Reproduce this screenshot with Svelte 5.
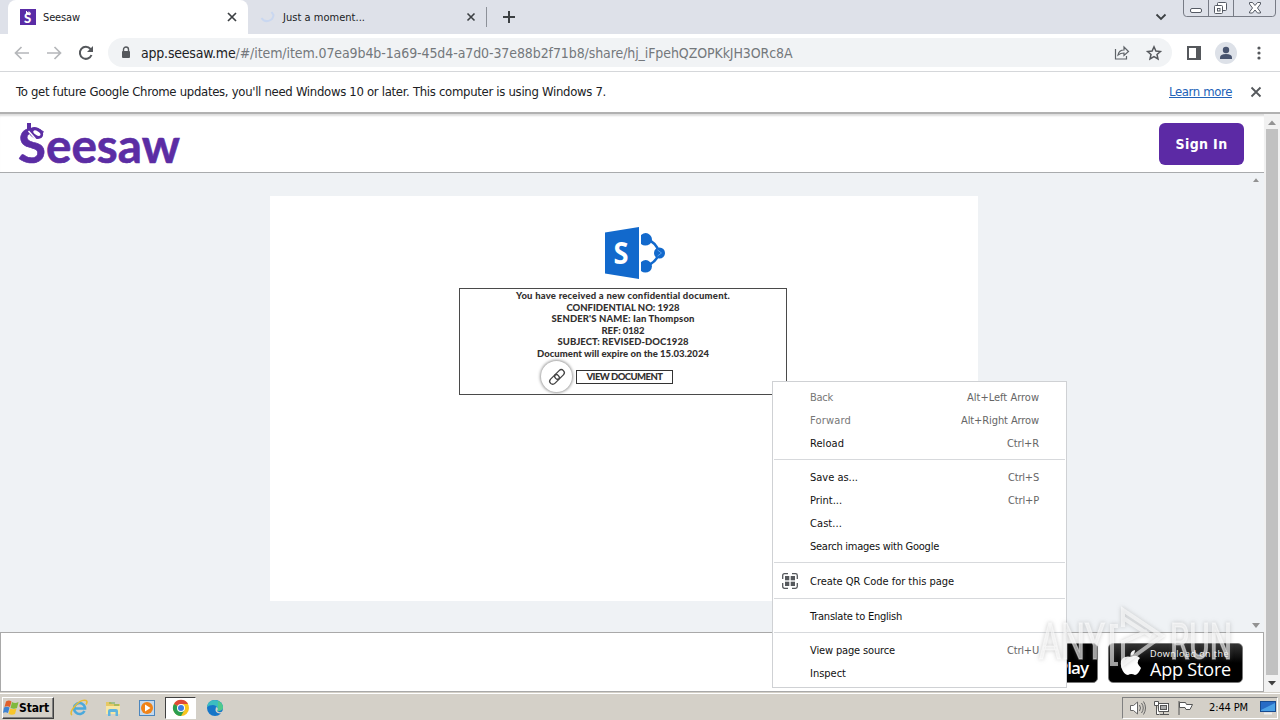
<script>
  const menu = [
    [
      { label: "Back", width: 23, keys: "Alt+Left Arrow", keysWidth: 72, disabled: true },
      { label: "Forward", width: 41, keys: "Alt+Right Arrow", keysWidth: 78, disabled: true },
      { label: "Reload", width: 34, keys: "Ctrl+R", keysWidth: 32 },
    ],
    [
      { label: "Save as...", width: 48, keys: "Ctrl+S", keysWidth: 31 },
      { label: "Print...", width: 32, keys: "Ctrl+P", keysWidth: 31 },
      { label: "Cast...", width: 32 },
      { label: "Search images with Google", width: 129 },
    ],
    [{ label: "Create QR Code for this page", width: 144, icon: true }],
    [{ label: "Translate to English", width: 92 }],
    [
      { label: "View page source", width: 85, keys: "Ctrl+U", keysWidth: 32 },
      { label: "Inspect", width: 36 },
    ],
  ];

  const lines = [
    ["You have received a new confidential document.", 214],
    ["CONFIDENTIAL NO: 1928", 113],
    ["SENDER'S NAME: Ian Thompson", 143],
    ["REF: 0182", 43],
    ["SUBJECT: REVISED-DOC1928", 131],
    ["Document will expire on the 15.03.2024", 172],
  ];

  // spread the letters so the text takes up the given width
  function fit(node, width) {
    const now = node.getBoundingClientRect().width;
    node.style.letterSpacing = `${(width - now) / node.textContent.length}px`;
  }
</script>

<div class="screen">
  <div class="tabs">
    <div class="tab active">
      <svg width="16" height="16" viewBox="0 0 16 16">
        <rect width="16" height="16" fill="#5a2ca6" />
        <text x="4" y="13.5" font-family="Lato" font-weight="900" font-size="13" fill="#fff">S</text>
        <path d="M6.500 2v3q4 1 4-1q-1-2-4 0" fill="none" stroke="#fff" />
      </svg>
      <span class="title" use:fit={37}>Seesaw</span>
      <svg class="close" width="10" height="10" viewBox="0 0 10 10"><path d="M1 1l8 8M9 1l-8 8" stroke="#3c4043" stroke-width="1.7" /></svg>
    </div>
    <div class="tab">
      <svg width="16" height="16" viewBox="0 0 16 16"><path d="M1.500 9a6.500 6.500 0 0 0 12-3l-2-3" fill="none" stroke="#c9d7f0" stroke-width="2" /></svg>
      <span class="title" use:fit={82}>Just a moment...</span>
      <svg class="close" width="10" height="10" viewBox="0 0 10 10"><path d="M1.500 1.500l7 7M8.500 1.500l-7 7" stroke="#3c4043" stroke-width="1.600" /></svg>
    </div>
    <span class="split"></span>
    <svg class="plus" width="12" height="12" viewBox="0 0 12 12"><path d="M6 0v12M0 6h12" stroke="#3c4043" stroke-width="2" /></svg>
    <svg class="chevron" width="12" height="8" viewBox="0 0 12 8"><path d="M1.500 1.500l4.500 4.500l4.500-4.500" fill="none" stroke="#3c4043" stroke-width="1.800" /></svg>
    <svg class="caption" width="97" height="18" viewBox="0 0 97 18" fill="none" stroke="#777b85">
      <path d="M.5 0v13q0 3.500 3 3.500h86q3 0 3-3.500V0M25.500 0v16M50.500 0v16" />
      <rect x="7.500" y="8.500" width="11" height="4" rx="1.500" fill="#fff" stroke="#555a64" />
      <rect x="34.500" y="2.500" width="9" height="8" rx="1" fill="#fff" stroke="#555a64" />
      <rect x="31.500" y="5.500" width="8" height="8" rx="1" fill="#fff" stroke="#555a64" />
      <rect x="34.500" y="8.500" width="2.500" height="2.500" stroke="#555a64" />
      <path d="M66.500 2.500h3l2.500 3l2.500-3h3v1.500l-3 4l3 4v1h-3l-2.500-3l-2.500 3h-3v-1l3-4l-3-4z" fill="#fff" stroke="#555a64" />
    </svg>
  </div>

  <div class="toolbar">
    <svg width="16" height="14" viewBox="0 0 16 14" fill="none" stroke="#b5b7ba" stroke-width="1.700"><path d="M15 7H2M7.500 1L1.500 7l6 6" /></svg>
    <svg class="fwd" width="16" height="14" viewBox="0 0 16 14" fill="none" stroke="#b5b7ba" stroke-width="1.700"><path d="M1 7h13M8.500 1l6 6l-6 6" /></svg>
    <svg class="reload" width="16" height="16" viewBox="0 0 16 16"><path d="M13.500 10A6 6 0 1 1 12.500 4L14 5.500" fill="none" stroke="#55585c" stroke-width="2" /><path d="M15 1v6H9z" fill="#55585c" /></svg>
    <div class="omnibox">
      <svg width="10" height="13" viewBox="0 0 10 13"><path d="M2.500 6V3.500a2.500 2.500 0 0 1 5 0V6" fill="none" stroke="#55585c" stroke-width="1.400" /><rect x="1" y="5" width="8" height="7" rx="1" fill="#55585c" /></svg>
      <span class="url"><b use:fit={94.5}>app.seesaw.me</b><i use:fit={557}>/#/item/item.07ea9b4b-1a69-45d4-a7d0-37e88b2f71b8/share/hj_iFpehQZOPKkJH3ORc8A</i></span>
      <svg class="share" width="16" height="14" viewBox="0 0 16 14" fill="none" stroke="#5f6368" stroke-width="1.200"><path d="M1.500 3v10h11v-3" /><path d="M4 9q1-5 6-5V1l4.500 4.500L10 9.500V7Q6.500 7 4 9z" /></svg>
      <svg class="star" width="16" height="16" viewBox="0 0 16 16" fill="none" stroke="#55585c" stroke-width="1.500"><path d="M8 1.800l1.900 4.200l4.500.5l-3.400 3l1 4.500L8 11.700L4 14l1-4.500l-3.400-3l4.500-.5z" /></svg>
    </div>
    <svg class="panel" width="14" height="14" viewBox="0 0 14 14"><rect x="1" y="1" width="12" height="12" fill="none" stroke="#55585c" stroke-width="2" /><path d="M9 1h4v12H9z" fill="#55585c" /></svg>
    <svg class="avatar" width="22" height="22" viewBox="0 0 22 22"><circle cx="11" cy="11" r="11" fill="#dde1e8" /><circle cx="11" cy="8" r="3.200" fill="#48546f" /><path d="M5 17v-1.500q0-3.500 6-3.500t6 3.500V17z" fill="#48546f" /></svg>
    <svg class="dots" width="4" height="14" viewBox="0 0 4 14" fill="#55585c"><circle cx="2" cy="2" r="1.600" /><circle cx="2" cy="7" r="1.600" /><circle cx="2" cy="12" r="1.600" /></svg>
  </div>

  <div class="infobar">
    <span use:fit={590}>To get future Google Chrome updates, you'll need Windows 10 or later. This computer is using Windows 7.</span>
    <span class="more" use:fit={63}>Learn more</span>
    <svg width="12" height="12" viewBox="0 0 12 12"><path d="M1.500 1.500l9 9M10.500 1.500l-9 9" stroke="#55585c" stroke-width="1.800" /></svg>
  </div>

  <div class="view">
    <div class="page">
      <header>
        <svg width="166" height="46" viewBox="0 0 166 46" fill="#5b2da4" font-family="Lato" font-weight="700">
          <text x="-1" y="43" font-size="48" stroke="#5b2da4" stroke-width=".6" textLength="28" lengthAdjust="spacingAndGlyphs">S</text>
          <text x="27" y="43" font-size="47" stroke="#5b2da4" stroke-width=".6" textLength="134" lengthAdjust="spacingAndGlyphs">eesaw</text>
          <ellipse cx="17" cy="13" rx="7.500" ry="5.500" fill="#5b2da4" transform="rotate(25 17 13)" />
          <path d="M8 3h4v7H8z" />
          <ellipse cx="18" cy="13.200" rx="4" ry="2" fill="#fff" transform="rotate(32 18 13)" />
          <path d="M9.500 11l7 8" stroke="#fff" stroke-width="1.500" />
        </svg>
        <button><span use:fit={52}>Sign In</span></button>
      </header>

      <main>
        <div class="slide">
          <svg class="sharepoint" width="62" height="54" viewBox="0 0 62 54">
            <path d="M1 6.500L35 1v52L1 47.500z" fill="#1269cc" />
            <text x="9.500" y="37.500" font-family="Open Sans" font-weight="700" font-size="30" fill="#fff" textLength="15" lengthAdjust="spacingAndGlyphs">S</text>
            <path d="M42 13q10 3 13 13M42 40q10-3 13-13" fill="none" stroke="#1269cc" stroke-width="2.500" />
            <path d="M37 9q5-4 9 0t0 9q-5 3-9 0zM37 36q5-4 9 0t0 9q-5 3-9 0z" fill="#1269cc" />
            <circle cx="55.500" cy="27" r="5.500" fill="#1269cc" />
            <path d="M53.500 24l4 3l-4 3" fill="none" stroke="#5aa0ec" />
          </svg>
          <div class="card">
            {#each lines as [text, width]}
              <p><span use:fit={width}>{text}</span></p>
            {/each}
            <div class="action">
              <span class="link">
                <svg width="18" height="18" viewBox="0 0 18 18" fill="none" stroke="#444" stroke-width="1.300">
                  <rect x="6" y="3.500" width="11" height="6" rx="3" transform="rotate(-45 11.500 6.500)" />
                  <rect x="1" y="8.500" width="11" height="6" rx="3" transform="rotate(-45 6.500 11.500)" />
                </svg>
              </span>
              <span class="doc"><span use:fit={76}>VIEW DOCUMENT</span></span>
            </div>
          </div>
        </div>
        <div class="inner-scroll">
          <svg width="6" height="4" viewBox="0 0 8 5"><path d="M0 5l4-5l4 5z" fill="#929292" /></svg>
          <svg width="8" height="5" viewBox="0 0 8 5"><path d="M0 0l4 5l4-5z" fill="#929292" /></svg>
        </div>
      </main>

      <footer>
        <div class="badge play"><span>Google Play</span></div>
        <div class="badge apple">
          <svg width="22" height="26" viewBox="0 0 22 26" fill="#fff"><path d="M11 7q5-3 9 1q-5 4 1 10q-3 7-6 7q-4-2-7 0Q4 25 1.500 18Q-1 9 5 7q3-1 6 0zM10.500 6Q10 1 15 0q0 5-4.500 6z" /></svg>
          <div>
            <small use:fit={79}>Download on the</small>
            <strong use:fit={81}>App Store</strong>
          </div>
        </div>
      </footer>
    </div>
    <div class="scrollbar">
      <svg width="8" height="5" viewBox="0 0 8 5"><path d="M0 5l4-4.500l4 4.500z" fill="#929292" /></svg>
      <div class="thumb"></div>
      <svg width="8" height="5" viewBox="0 0 8 5"><path d="M0 0l4 4.500l4-4.500z" fill="#404040" /></svg>
    </div>
  </div>

  <div class="taskbar">
    <div class="start">
      <svg width="16" height="15" viewBox="0 0 16 15">
        <path d="M3 1.500q3-2 5.500 0L7 7Q4 5.500 1.500 7z" fill="#e0602c" />
        <path d="M9 2q3 2 6.500 0L14 8q-3 1.500-6.500 0z" fill="#7fb93c" />
        <path d="M1 7.500q3-1.500 5.500 0L5 13q-3-1.500-5 0z" fill="#3e83d2" />
        <path d="M7 8.500q3 1.500 6.500 0L12 14q-3 1.500-6.500 0z" fill="#f8c62c" />
      </svg>
      <span use:fit={30}>Start</span>
    </div>
    <svg class="ie" width="18" height="18" viewBox="0 0 18 18" fill="none">
      <path d="M14.500 12A5.500 5.500 0 1 1 15 8.500v1H5" stroke="#4ba9dc" stroke-width="2.600" />
      <path d="M2 16Q-1 14 5 7T16 1.500q2 1 0 4" stroke="#e6bb36" stroke-width="1.600" />
    </svg>
    <svg width="18" height="18" viewBox="0 0 18 18">
      <path d="M2 3h5l1 2h8v10H2z" fill="#e6c865" /><path d="M2 7h14v8H2z" fill="#f8e7a4" />
      <path d="M4 17v-5q0-2 2-2h6q2 0 2 2v5h-2.500v-4h-5v4z" fill="#60b4dd" /><path d="M5 4h6M10 6h5" stroke="#6cad50" />
    </svg>
    <svg width="18" height="18" viewBox="0 0 18 18">
      <rect x="1.500" y="1.500" width="15" height="15" fill="#c4d9ee" stroke="#4c86bd" /><circle cx="9" cy="9" r="6" fill="#f08318" /><path d="M7 5.500l5.500 3.500L7 12.500z" fill="#fff" />
    </svg>
    <div class="chrome">
      <svg width="18" height="18" viewBox="0 0 18 18">
        <circle cx="9" cy="9" r="8" fill="#f9c51d" /><path d="M9 9L2 5A8 8 0 0 1 16 5H9z" fill="#df4937" /><path d="M9 9L2 5A8 8 0 0 0 9 17l3.500-6z" fill="#2b9e50" />
        <circle cx="9" cy="9" r="4" fill="#fff" /><circle cx="9" cy="9" r="3" fill="#3d7de3" />
      </svg>
    </div>
    <svg width="18" height="18" viewBox="0 0 18 18">
      <circle cx="9" cy="9" r="8" fill="#1676c8" />
      <path d="M1 8Q2 1 9 1q8 1 8 8q-1 3-6 3q1-6-4-6q-4 0-6 2z" fill="#3cbdc0" />
      <path d="M12 2q5 2 5 7q-1 3-5 3z" fill="#4fc98c" />
      <path d="M10 8q3 1 1 4q2 2 5.500.5L18 10v5l-4-.5Q8 14 10 8z" fill="#d4d0c8" />
    </svg>
    <div class="tray">
      <svg width="18" height="16" viewBox="0 0 18 16" fill="#fff" stroke="#666"><path d="M1.500 5.500h3L8.500 2v12l-4-3.500h-3z" /><path d="M10.500 5q2 3 0 6M12.500 3q3.500 5 0 10M14.500 1.500q4 6.500 0 13" fill="none" /></svg>
      <svg width="18" height="16" viewBox="0 0 18 16" fill="#fff" stroke="#555"><rect x="5.500" y="3.500" width="10" height="8" /><rect x="7.500" y="5.500" width="6" height="4" fill="#aaa" /><path d="M7 14.500h9M10.500 12v2M1.500 1.500h4v4h-4zM3.500 6v8.500h3" /></svg>
      <svg width="18" height="16" viewBox="0 0 18 16" fill="#fff" stroke="#555"><path d="M2 1v14M2.500 2.500h6l1 2h6l-2.500 5H9l-1-2H2.500z" /></svg>
      <span use:fit={39}>2:44 PM</span>
      <svg class="desk" width="16" height="14" viewBox="0 0 16 14"><rect x=".5" y=".5" width="15" height="10" fill="#286bc5" stroke="#174a8f" /><path d="M1 9L15 2v8H1z" fill="#4ca1e5" /><path d="M4 12.500h8" stroke="#eee" stroke-width="2" /></svg>
    </div>
  </div>

  <div class="menu">
    {#each menu as group, i}
      {#if i > 0}<hr />{/if}
      {#each group as item}
        <div class="item" class:disabled={item.disabled} class:tall={item.icon}>
          <span class="icon">
            {#if item.icon}
              <svg width="16" height="16" viewBox="0 0 16 16" fill="#55585c">
                <path d="M.7 6V2.500q0-1.800 1.800-1.800H6M10 .7h3.500q1.800 0 1.800 1.800V6M15.300 10v3.500q0 1.800-1.800 1.800H10M6 15.300H2.500q-1.800 0-1.800-1.800V10" fill="none" stroke="#55585c" stroke-width="1.300" />
                <rect x="3" y="3" width="4.300" height="4.300" /><rect x="8.700" y="3" width="4.300" height="4.300" /><rect x="3" y="8.700" width="4.300" height="4.300" /><rect x="8.700" y="8.700" width="4.300" height="4.300" />
              </svg>
            {/if}
          </span>
          <span class="label" use:fit={item.width}>{item.label}</span>
          {#if item.keys}<span class="keys" use:fit={item.keysWidth}>{item.keys}</span>{/if}
        </div>
      {/each}
    {/each}
  </div>

  <svg class="watermark" width="200" height="64" viewBox="0 0 200 64" font-family="Roboto" font-size="50">
    <text x="3" y="53" textLength="66" lengthAdjust="spacingAndGlyphs">ANY</text>
    <text x="134" y="53" textLength="62" lengthAdjust="spacingAndGlyphs">RUN</text>
    <path d="M82 20H76v38h6M87 21V4l39 26l-39 28V36l24-11M87 12l28 18" />
  </svg>
</div>

<style>
  :global(body) {
    margin: 0;
    overflow: hidden;
  }

  .screen {
    width: 1280px;
    height: 720px;
    position: relative;
    overflow: hidden;
    display: flex;
    flex-direction: column;
    background: #fff;
    font: 11px/14px "DejaVu Sans Condensed", "DejaVu Sans", sans-serif;
    font-stretch: condensed;
    color: #202124;
    white-space: nowrap;
  }

  svg {
    display: block;
    flex: none;
    overflow: visible;
    font-stretch: normal;
  }

  span {
    flex: none;
  }

  .tabs {
    height: 34px;
    display: flex;
    align-items: center;
    background: #dee1e9;
    padding-left: 8px;
  }

  .tab {
    box-sizing: border-box;
    width: 239px;
    height: 34px;
    display: flex;
    align-items: center;
    padding: 0 11px 0 12px;
  }

  .tab.active {
    width: 240px;
    background: #fff;
    border-radius: 8px 8px 0 0;
  }

  .tab .title {
    margin-left: 7px;
    padding-top: 2px;
  }

  .close {
    margin-left: auto;
  }

  .split {
    width: 1px;
    height: 20px;
    margin-left: -1px;
    background: #8d9199;
  }

  .plus {
    margin-left: 16px;
  }

  .chevron {
    margin-left: auto;
  }

  .caption {
    margin: -16px 0 0 16px;
  }

  .toolbar {
    height: 37px;
    display: flex;
    align-items: center;
    padding-left: 14px;
    border-bottom: 1px solid #d5d7da;
  }

  .fwd {
    margin-left: 16px;
  }

  .reload {
    margin: 0 14px 0 16px;
  }

  .omnibox {
    box-sizing: border-box;
    width: 1064px;
    height: 29px;
    border-radius: 15px;
    background: #f1f3f5;
    display: flex;
    align-items: center;
    padding: 0 10px 0 13px;
  }

  .url {
    margin-left: 10px;
    font-size: 14px;
    display: flex;
  }

  .url b,
  .url i {
    font-weight: normal;
    font-style: normal;
  }

  .url i {
    color: #74787c;
  }

  .share {
    margin-left: auto;
  }

  .star {
    margin-left: 16px;
  }

  .panel {
    margin-left: 15px;
  }

  .avatar {
    margin-left: 14px;
  }

  .dots {
    margin-left: 20px;
  }

  .infobar {
    height: 40px;
    display: flex;
    align-items: center;
    padding: 0 18px 0 16px;
    border-bottom: 2px solid #b1b1b1;
    font-size: 13px;
  }

  .more {
    margin: 0 18px 0 auto;
    color: #2262b8;
    text-decoration: underline;
  }

  .view {
    height: 578px;
    display: flex;
  }

  .page {
    width: 1264px;
    display: flex;
    flex-direction: column;
  }

  header {
    height: 58px;
    display: flex;
    align-items: center;
    justify-content: space-between;
    padding: 0 20px 0 19px;
    border-bottom: 1px solid #a9abad;
    box-shadow: inset 0 3px 2px -1px #ddd;
  }

  button {
    width: 85px;
    height: 42px;
    margin-top: 2px;
    padding: 0;
    border: 0;
    border-radius: 6px;
    background: #5c2aa5;
    color: #fff;
    font: bold 14px "DejaVu Sans Condensed", "DejaVu Sans", sans-serif;
  }

  button span {
    display: inline-block;
  }

  main {
    height: 459px;
    display: flex;
    background: #eff2f5;
  }

  .slide {
    width: 708px;
    height: 405px;
    margin: 23px 0 0 270px;
    display: flex;
    flex-direction: column;
    align-items: center;
    background: #fff;
  }

  .sharepoint {
    margin: 30px 0 0 22px;
  }

  .card {
    box-sizing: border-box;
    width: 328px;
    height: 107px;
    margin: 8px 2px 0 0;
    padding-top: 1px;
    border: 1px solid #4a4a4a;
    color: #33302f;
    font: 900 9.5px/11.5px Lato, sans-serif;
    font-stretch: normal;
    text-align: center;
  }

  p {
    margin: 0;
    height: 11.5px;
  }

  p span,
  .doc span {
    display: inline-block;
  }

  .action {
    display: flex;
    align-items: center;
    margin: 2px 0 0 81px;
  }

  .link {
    width: 31px;
    height: 31px;
    border-radius: 50%;
    background: #fff;
    box-shadow: 0 0 3px 1px #999;
    display: grid;
    place-items: center;
  }

  .doc {
    box-sizing: border-box;
    width: 97px;
    height: 14px;
    margin-left: 4px;
    border: 1px solid #333;
    line-height: 12px;
  }

  .inner-scroll {
    margin-left: auto;
    padding: 5px 4px 4px 0;
    display: flex;
    flex-direction: column;
    align-items: center;
    justify-content: space-between;
  }

  footer {
    box-sizing: border-box;
    height: 60px;
    border: 1px solid #a9a9a9;
    display: flex;
    justify-content: flex-end;
    align-items: center;
    gap: 10px;
    padding: 2px 20px 0 0;
  }

  .badge {
    box-sizing: border-box;
    width: 135px;
    height: 40px;
    border-radius: 5px;
    border: 1px solid #777;
    background: #000;
    color: #fff;
    display: flex;
    align-items: center;
    font-family: "Open Sans", sans-serif;
    font-stretch: normal;
  }

  .play {
    justify-content: flex-end;
    padding: 9px 9px 0 0;
    font-size: 17px;
    font-weight: 600;
    letter-spacing: -1px;
  }

  .apple {
    padding-left: 11px;
    background: linear-gradient(#333, #000 50%);
  }

  .apple div {
    display: flex;
    flex-direction: column;
    align-items: flex-start;
    margin-left: 8px;
  }

  small {
    font-size: 9px;
    line-height: 13px;
  }

  strong {
    font-size: 18px;
    line-height: 19px;
    font-weight: 500;
  }

  .scrollbar {
    width: 16px;
    background: #f1f1f1;
    display: flex;
    flex-direction: column;
    align-items: center;
    padding: 6px 0;
    box-sizing: border-box;
  }

  .thumb {
    width: 12px;
    height: 546px;
    margin: 4px 0 6px;
    background: #c1c1c1;
  }

  .taskbar {
    box-sizing: border-box;
    height: 28px;
    border-top: 1px solid #d4d0c8;
    box-shadow: inset 0 1px #fff;
    background: #d4d0c8;
    display: flex;
    align-items: center;
    padding-top: 2px;
  }

  .start {
    box-sizing: border-box;
    width: 52px;
    height: 22px;
    margin-left: 2px;
    display: flex;
    align-items: center;
    border: 1px solid;
    border-color: #fff #404040 #404040 #fff;
    box-shadow: inset -1px -1px #808080;
    font-weight: bold;
    font-size: 12px;
    color: #000;
  }

  .ie {
    margin-left: 16px;
  }

  .taskbar > svg + svg {
    margin-left: 16px;
  }

  .chrome {
    box-sizing: border-box;
    width: 31px;
    height: 22px;
    margin: 0 10px 0 9px;
    display: grid;
    place-items: center;
    background: #fff;
    border: 1px solid;
    border-color: #404040 #fff #fff #404040;
  }

  .tray {
    box-sizing: border-box;
    width: 156px;
    height: 22px;
    margin: 0 2px 0 auto;
    padding-left: 6px;
    display: flex;
    align-items: center;
    gap: 6px;
    border: 1px solid;
    border-color: #808080 #fff #fff #808080;
    color: #000;
  }

  .tray span {
    margin-left: 8px;
  }

  .desk {
    margin-left: 6px;
  }

  .menu {
    position: absolute;
    left: 772px;
    top: 381px;
    box-sizing: border-box;
    width: 295px;
    height: 307px;
    padding: 3px 1px;
    border: 1px solid #cfd1d4;
    background: #fff;
    color: #111;
  }

  .item {
    height: 23px;
    display: flex;
    align-items: center;
    padding-right: 26px;
  }

  .item.tall {
    height: 25px;
  }

  .item.disabled {
    color: #777;
  }

  .icon {
    width: 28px;
    padding-left: 8px;
  }

  .label,
  .keys {
    padding-top: 2px;
  }

  .keys {
    margin-left: auto;
    color: #666;
  }

  hr {
    margin: 5px 0;
    border: 0;
    height: 1px;
    background: #d7d9dc;
  }

  .watermark {
    position: absolute;
    left: 1036px;
    top: 606px;
    fill: rgba(255, 255, 255, 0.6);
    stroke: rgba(255, 255, 255, 0.4);
    stroke-width: 1.5;
    filter: drop-shadow(0 0 2px rgba(100, 100, 100, 0.5));
  }

  .watermark path {
    fill: none;
    stroke: rgba(255, 255, 255, 0.6);
    stroke-width: 4;
  }
</style>
